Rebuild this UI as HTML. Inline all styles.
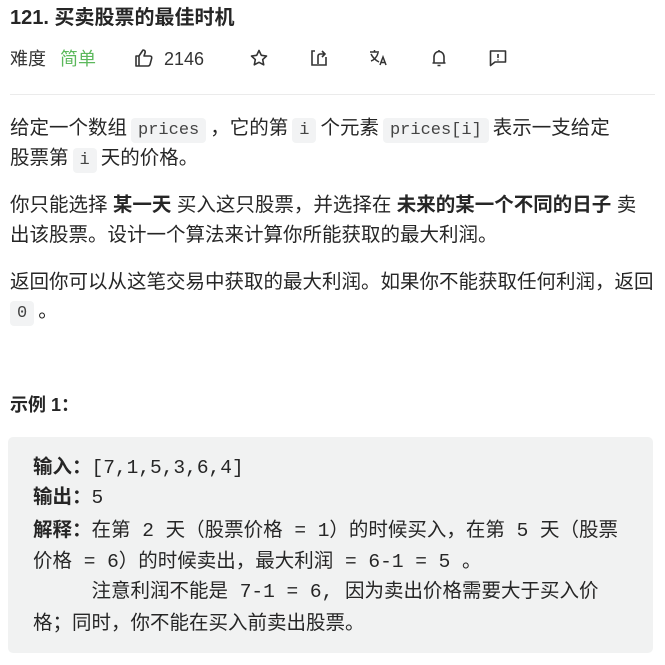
<!DOCTYPE html>
<html><head><meta charset="utf-8"><style>
body{margin:0;width:665px;height:665px;background:#fff;overflow:hidden;font-family:"Liberation Sans","Noto Sans CJK SC",sans-serif;color:#262626;}
.l{position:absolute;left:10px;white-space:nowrap;font-size:19.5px;line-height:30px;}
code{font-family:"Liberation Mono","Noto Sans CJK SC",monospace;font-size:17px;background:#f2f3f4;border-radius:4px;padding:3px 7px;margin:0 4px;color:#444;}
b{font-weight:700;}
.ic{position:absolute;top:48px;}
.box{position:absolute;left:8px;top:437px;width:645px;height:216px;background:#f1f2f2;border-radius:5px;}
.c{position:absolute;left:33px;white-space:nowrap;font-size:19.5px;line-height:30px;font-family:"Liberation Mono","Noto Sans CJK SC",monospace;color:#262626;}
.c b{font-family:"Liberation Sans","Noto Sans CJK SC",sans-serif;}
</style></head><body>
<div class="l" style="top:3px;font-size:20px;font-weight:600;">121. 买卖股票的最佳时机</div>
<div class="l" style="top:44px;font-size:18px;color:#333;">难度</div>
<div class="l" style="top:44px;left:60px;font-size:18px;color:#5cb85c;">简单</div>
<svg class="ic" style="left:134px" width="20" height="20" viewBox="0 0 20 20" fill="none" stroke="#333" stroke-width="1.6" stroke-linejoin="round"><path d="M2 8h3v10H2z M5 8l4-6c2 0 2.5 1.5 2 3l-1 3h6c1.2 0 2 1 1.7 2.2l-1.6 6c-.3 1-1 1.8-2 1.8H5"/></svg>
<div class="l" style="top:44px;left:164px;font-size:18px;color:#333;">2146</div>
<svg class="ic" style="left:249px" width="20" height="20" viewBox="0 0 20 20" fill="none" stroke="#333" stroke-width="1.6" stroke-linejoin="round"><path d="M10 2.5l2.3 4.8 5.2.7-3.8 3.6 1 5.2L10 14.3 5.3 16.8l1-5.2L2.5 8l5.2-.7z"/></svg>
<svg class="ic" style="left:309px" width="20" height="20" viewBox="0 0 20 20" fill="none" stroke="#333" stroke-width="1.6"><path d="M6 3H3v14h14V9 M9 16V8c0-1 1-2 2-2h5 M13 3l3 3-3 3"/></svg>
<svg class="ic" style="left:368px" width="22" height="20" viewBox="0 0 22 20" fill="none" stroke="#333" stroke-width="1.5"><path d="M2 4h9 M6.5 2v2 M3 6c2 4 4 6 8 8 M10 5c-1 4-4 7-7 8 M12 17l3-8 3 8 M13 14.5h4"/></svg>
<svg class="ic" style="left:429px" width="20" height="20" viewBox="0 0 20 20" fill="none" stroke="#333" stroke-width="1.6" stroke-linejoin="round"><path d="M5 15V9c0-3 2-5.5 5-5.5s5 2.5 5 5.5v6z M3.5 15h13 M10 3.5V2 M8.5 17.5h3"/></svg>
<svg class="ic" style="left:488px" width="20" height="20" viewBox="0 0 20 20" fill="none" stroke="#333" stroke-width="1.6" stroke-linejoin="round"><path d="M2.5 3h15v11H7l-4.5 3.5z M10 6v4 M10 11.5v1"/></svg>
<div style="position:absolute;left:10px;top:94px;width:645px;height:1px;background:#ebebeb"></div>

<div class="l" style="top:113px">给定一个数组<code>prices</code>，它的第<code>i</code>个元素<code>prices[i]</code>表示一支给定</div>
<div class="l" style="top:143px">股票第<code>i</code>天的价格。</div>
<div class="l" style="top:190px">你只能选择 <b>某一天</b> 买入这只股票，并选择在 <b>未来的某一个不同的日子</b> 卖</div>
<div class="l" style="top:220px">出该股票。设计一个算法来计算你所能获取的最大利润。</div>
<div class="l" style="top:267px">返回你可以从这笔交易中获取的最大利润。如果你不能获取任何利润，返回</div>
<div class="l" style="top:296px"><code style="margin-left:0">0</code>。</div>
<div class="l" style="top:390px;font-size:18px;"><b>示例 1：</b></div>

<div class="box"></div>
<div class="c" style="top:452px"><b>输入：</b>[7,1,5,3,6,4]</div>
<div class="c" style="top:482px"><b>输出：</b>5</div>
<div class="c" style="top:515px"><b>解释：</b>在第 2 天（股票价格 = 1）的时候买入，在第 5 天（股票</div>
<div class="c" style="top:547px">价格 = 6）的时候卖出，最大利润 = 6-1 = 5 。</div>
<div class="c" style="top:577px">&nbsp;&nbsp;&nbsp;&nbsp;&nbsp;注意利润不能是 7-1 = 6, 因为卖出价格需要大于买入价</div>
<div class="c" style="top:609px">格；同时，你不能在买入前卖出股票。</div>
</body></html>
